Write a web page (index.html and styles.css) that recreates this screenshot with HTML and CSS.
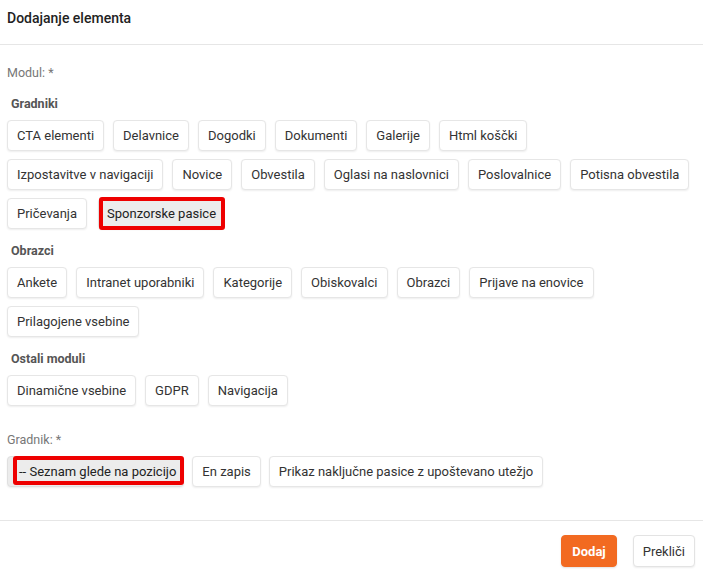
FILE: index.html
```html
<!DOCTYPE html>
<html lang="sl">
<head>
<meta charset="utf-8">
<title>Dodajanje elementa</title>
<link rel="stylesheet" href="styles.css">
</head>
<body>
<div class="dialog">
  <div class="dialog-header">
    <h1 class="dialog-title">Dodajanje elementa</h1>
  </div>
  <div class="dialog-body">
    <div class="field-label">Modul: *</div>

    <div class="group-label first">Gradniki</div>
    <div class="chips">
      <button class="chip">CTA elementi</button>
      <button class="chip">Delavnice</button>
      <button class="chip">Dogodki</button>
      <button class="chip">Dokumenti</button>
      <button class="chip">Galerije</button>
      <button class="chip">Html koščki</button>
      <span class="row-break"></span>
      <button class="chip">Izpostavitve v navigaciji</button>
      <button class="chip">Novice</button>
      <button class="chip">Obvestila</button>
      <button class="chip">Oglasi na naslovnici</button>
      <button class="chip">Poslovalnice</button>
      <button class="chip">Potisna obvestila</button>
      <button class="chip">Pričevanja</button>
      <button class="chip selected sel-module">Sponzorske pasice</button>
    </div>

    <div class="group-label">Obrazci</div>
    <div class="chips">
      <button class="chip">Ankete</button>
      <button class="chip">Intranet uporabniki</button>
      <button class="chip">Kategorije</button>
      <button class="chip">Obiskovalci</button>
      <button class="chip">Obrazci</button>
      <button class="chip">Prijave na enovice</button>
      <button class="chip">Prilagojene vsebine</button>
    </div>

    <div class="group-label">Ostali moduli</div>
    <div class="chips">
      <button class="chip">Dinamične vsebine</button>
      <button class="chip">GDPR</button>
      <button class="chip">Navigacija</button>
    </div>

    <div class="field-label second">Gradnik: *</div>
    <div class="chips widgets">
      <button class="chip selected sel-widget">-- Seznam glede na pozicijo</button>
      <button class="chip">En zapis</button>
      <button class="chip">Prikaz naključne pasice z upoštevano utežjo</button>
    </div>
  </div>
  <div class="dialog-footer">
    <button class="btn btn-primary">Dodaj</button>
    <button class="btn btn-default">Prekliči</button>
  </div>
</div>
</body>
</html>
```

FILE: styles.css
```css
* {
  box-sizing: border-box;
}

html, body {
  margin: 0;
  padding: 0;
  background: #ffffff;
}

body {
  font-family: Roboto, "Liberation Sans", Arial, sans-serif;
  color: #333333;
  font-size: 13px;
}

.dialog {
  width: 703px;
  height: 573px;
  display: flex;
  flex-direction: column;
}

.dialog-header {
  height: 45px;
  padding: 9px 7px 0 7px;
  border-bottom: 1px solid #e6e6e6;
}

.dialog-title {
  margin: 0;
  font-size: 14px;
  line-height: 18px;
  font-weight: 500;
  color: #222222;
}

.dialog-body {
  padding: 20px 7px 0 7px;
  height: 476px;
  border-bottom: 1px solid #e6e6e6;
}

.field-label {
  font-size: 12.5px;
  line-height: 16px;
  color: #777777;
}

.field-label.second {
  margin-top: 26px;
}

.group-label {
  margin-top: 14px;
  padding-left: 4px;
  font-size: 12.5px;
  line-height: 16px;
  font-weight: 700;
  color: #555555;
}

.group-label.first {
  margin-top: 15px;
}

.chips {
  display: flex;
  flex-wrap: wrap;
  column-gap: 9px;
  row-gap: 0;
  margin-top: 8px;
  margin-bottom: -8px;
}

.chips.widgets {
  column-gap: 8px;
}

.row-break {
  flex-basis: 100%;
  height: 0;
}

.chip {
  position: relative;
  margin: 0 0 8px 0;
  height: 31px;
  padding: 0 9px;
  border: 1px solid #e6e6e6;
  border-radius: 4px;
  background: #ffffff;
  box-shadow: 0 1px 2px rgba(0, 0, 0, 0.07);
  font-family: Roboto, "Liberation Sans", Arial, sans-serif;
  font-size: 13px;
  color: #333333;
  line-height: 29px;
  white-space: nowrap;
  cursor: pointer;
}

.chip.selected {
  background: #ececec;
  border-color: #e0e0e0;
  color: #222222;
}

.chip.selected::after {
  content: "";
  position: absolute;
  border: 4px solid #ee0000;
  border-radius: 3px;
  pointer-events: none;
}

.sel-module {
  padding: 0 7px 0 8px;
  margin-left: 2px;
}

.sel-module::after {
  top: -2px;
  bottom: -2px;
  left: 0;
  right: -2px;
}

.sel-widget {
  padding: 0 7px 0 11px;
}

.sel-widget::after {
  top: -1px;
  bottom: 1px;
  left: 5px;
  right: -1px;
}

.dialog-footer {
  flex: 1;
  display: flex;
  justify-content: flex-end;
  align-items: flex-start;
  gap: 16px;
  padding: 14px 8px 0 0;
}

.btn {
  margin: 0;
  height: 32px;
  padding: 0 10px;
  border-radius: 4px;
  font-family: Roboto, "Liberation Sans", Arial, sans-serif;
  font-size: 13px;
  cursor: pointer;
}

.btn-primary {
  background: #f26a21;
  border: 1px solid #f26a21;
  color: #ffffff;
  font-weight: 700;
  box-shadow: 0 1px 2px rgba(0, 0, 0, 0.12);
}

.btn-default {
  padding: 0 9px;
  background: #ffffff;
  border: 1px solid #e3e3e3;
  color: #333333;
  box-shadow: 0 1px 2px rgba(0, 0, 0, 0.07);
}
```
